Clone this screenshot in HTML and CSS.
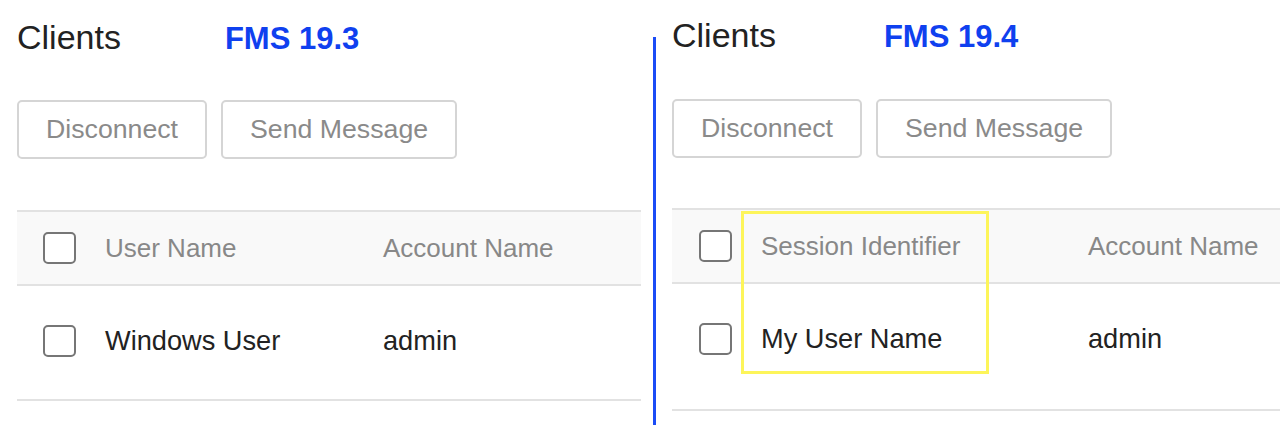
FILE: index.html
```html
<!DOCTYPE html>
<html lang="en">
<head>
<meta charset="utf-8">
<title>Clients</title>
<link rel="stylesheet" href="styles.css">
</head>
<body>
<div class="page">
  <section class="panel panel-old">
    <div class="title-row">
      <h1 class="title">Clients</h1>
      <span class="version">FMS 19.3</span>
    </div>
    <div class="actions">
      <button class="btn">Disconnect</button>
      <button class="btn">Send Message</button>
    </div>
    <div class="table">
      <div class="thead">
        <span class="cb"></span>
        <span class="cell">User Name</span>
        <span class="cell">Account Name</span>
      </div>
      <div class="trow">
        <span class="cb"></span>
        <span class="cell">Windows User</span>
        <span class="cell">admin</span>
      </div>
    </div>
  </section>
  <div class="divider"></div>
  <section class="panel panel-new">
    <div class="title-row">
      <h1 class="title">Clients</h1>
      <span class="version">FMS 19.4</span>
    </div>
    <div class="actions">
      <button class="btn">Disconnect</button>
      <button class="btn">Send Message</button>
    </div>
    <div class="table">
      <div class="thead">
        <span class="cb"></span>
        <span class="cell">Session Identifier</span>
        <span class="cell">Account Name</span>
      </div>
      <div class="trow">
        <span class="cb"></span>
        <span class="cell">My User Name</span>
        <span class="cell">admin</span>
      </div>
      <div class="highlight"></div>
    </div>
  </section>
</div>
</body>
</html>
```
FILE: styles.css
```css
* { box-sizing: border-box; }
html, body {
  margin: 0;
  padding: 0;
  background: #ffffff;
}
body {
  font-family: "Liberation Sans", Arial, Helvetica, sans-serif;
  color: #222;
  width: 1280px;
  height: 446px;
  overflow: hidden;
}
.page {
  display: flex;
  align-items: flex-start;
}
.panel {
  display: flex;
  flex-direction: column;
}
.panel-old {
  width: 641px;
  padding: 20px 0 0 17px;
  --gap-title: 104px;
  --col1: 249px;
  --pad-left: 26px;
  --row-h: 113px;
  --btn-gap: 44px;
  --table-gap: 51px;
}
.panel-new {
  width: 608px;
  padding: 18px 0 0 0;
  --gap-title: 108px;
  --col1: 298px;
  --pad-left: 27px;
  --row-h: 125px;
  --btn-gap: 45px;
  --table-gap: 50px;
}
.divider {
  width: 3px;
  height: 388px;
  margin: 37px 16px 0 12px;
  background: #1b4cf6;
  flex-shrink: 0;
}
.title-row {
  display: flex;
  align-items: baseline;
}
.title {
  margin: 0;
  font-size: 34px;
  line-height: 34px;
  font-weight: normal;
  color: #222;
}
.version {
  margin-left: var(--gap-title);
  font-size: 31px;
  line-height: 34px;
  font-weight: bold;
  color: #0f40ef;
}
.actions {
  display: flex;
  gap: 14px;
  margin-top: var(--btn-gap);
}
.btn {
  font-family: inherit;
  font-size: 26.7px;
  line-height: 31px;
  color: #8a8a8a;
  background: #fff;
  border: 2px solid #d5d5d5;
  border-radius: 5px;
  padding: 12px 27px;
  margin: 0;
}
.table {
  position: relative;
  margin-top: var(--table-gap);
}
.thead, .trow {
  display: grid;
  grid-template-columns: 33px var(--col1) 1fr;
  column-gap: 29px;
  align-items: center;
  padding-left: var(--pad-left);
  border-bottom: 2px solid #e2e2e2;
}
.thead {
  height: 76px;
  border-top: 2px solid #e2e2e2;
  background: #f9f9f9;
  font-size: 26px;
  color: #888;
}
.trow {
  height: calc(var(--row-h) + 2px);
  align-items: start;
  padding-top: 39px;
  font-size: 27.2px;
  color: #222;
  background: #fff;
}
.trow .cell { line-height: 32px; }
.cb {
  display: block;
  width: 33px;
  height: 32px;
  border: 2px solid #767676;
  border-radius: 5px;
  background: #fff;
}
.cell {
  white-space: nowrap;
}
.highlight {
  position: absolute;
  left: 69px;
  top: 3px;
  width: 248px;
  height: 163px;
  border: 3px solid #fdf55a;
  pointer-events: none;
}
```
